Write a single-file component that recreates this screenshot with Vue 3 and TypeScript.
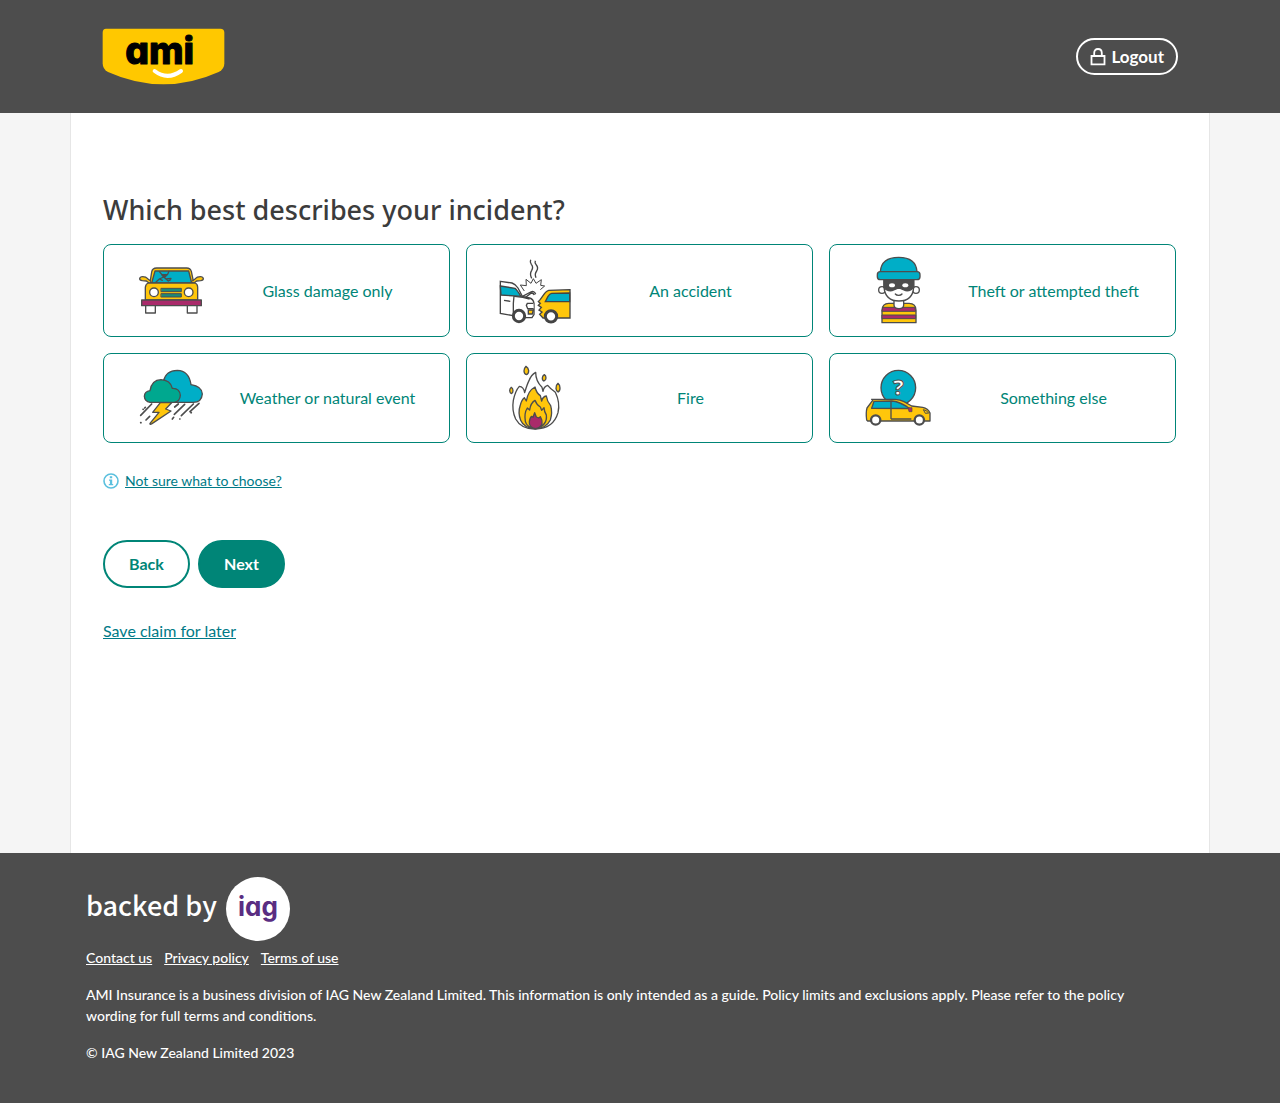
<script setup lang="ts">
import { ref } from 'vue'

type IconName = 'glass' | 'accident' | 'theft' | 'weather' | 'fire' | 'other'

interface Incident {
  icon: IconName
  label: string
}

const incidents: Incident[] = [
  { icon: 'glass', label: 'Glass damage only' },
  { icon: 'accident', label: 'An accident' },
  { icon: 'theft', label: 'Theft or attempted theft' },
  { icon: 'weather', label: 'Weather or natural event' },
  { icon: 'fire', label: 'Fire' },
  { icon: 'other', label: 'Something else' },
]

const footerLinks: string[] = ['Contact us', 'Privacy policy', 'Terms of use']

const selected = ref<IconName | null>(null)
</script>

<template>
  <div class="page">
    <header class="header">
      <div class="container header-inner">
        <svg class="brand" viewBox="0 0 369 171" role="img" aria-label="AMI">
          <path
            fill="#ffc800"
            d="M12 2H355Q367 2 367 14V106Q367 124 350 132Q268 169 184 169Q100 169 18 132Q2 124 2 106V14Q2 2 12 2Z"
          />
          <text class="brand-text" x="173" y="109" text-anchor="middle">ami</text>
          <path fill="none" stroke="#fff" stroke-width="12" stroke-linecap="round" d="M158 129Q196 158 237 129" />
        </svg>
        <button class="logout" type="button">
          <svg viewBox="0 0 16 18" width="16" height="18" aria-hidden="true">
            <path
              fill="none"
              stroke="#fff"
              stroke-width="1.8"
              d="M1.5 8H14.5V16.3H1.5ZM4.2 8V5Q4.2 1 8 1Q11.8 1 11.8 5V8"
            />
          </svg>
          Logout
        </button>
      </div>
    </header>

    <main class="container main">
      <h1>Which best describes your incident?</h1>

      <div class="cards">
        <button
          v-for="item in incidents"
          :key="item.icon"
          class="card"
          type="button"
          :aria-pressed="selected === item.icon"
          @click="selected = item.icon"
        >
          <svg v-if="item.icon === 'glass'" class="icon" viewBox="-9 -1 270 216" aria-hidden="true">
            <g stroke="#4d4d4d" stroke-width="4" stroke-linejoin="round" stroke-linecap="round">
              <path fill="#fff" d="M47 150H76V173H47ZM172 150H201V173H172Z" />
              <path fill="#ffc60b" d="M60 82L65 50Q67 38 80 38H170Q181 38 184 48L191 82Z" />
              <path fill="#00aec7" d="M65 83L75 47H176L185 83Z" />
              <path fill="#ffc60b" d="M57 83L49 77Q44 76 37 76Q29 75 29 70Q30 64 38 64Q48 64 53 70L61 76M192 83L200 77Q205 76 212 76Q220 75 220 70Q219 64 211 64Q201 64 196 70L188 76" />
              <path fill="#ffc60b" d="M55 83H195Q203 86 203 96V134H46V96Q47 86 55 83Z" />
              <circle cx="72" cy="111" r="13" fill="#fff" />
              <circle cx="176" cy="111" r="13" fill="#fff" />
              <path fill="#1b8a7a" stroke-width="3" d="M94 99H154V109H94ZM94 115H154V125H94Z" />
              <path fill="#a92a6a" d="M35 134H214V151H35Z" />
              <path fill="none" d="M88 49L96 58L113 57L117 48M96 58L101 65L111 60M101 65L88 71L78 80M101 65L108 71L123 69M108 71L115 77L122 73M88 71L97 75" />
              <path fill="#4d4d4d" d="M96 59L109 58L104 66Z" />
            </g>
          </svg>

          <svg v-else-if="item.icon === 'accident'" class="icon" viewBox="0 13 270 216" aria-hidden="true">
            <g fill="none" stroke="#444" stroke-width="4" stroke-linejoin="miter" stroke-linecap="butt">
              <path d="M122 27Q119 34 124 41Q131 49 125 59Q118 70 125 83M136 30Q133 37 139 43Q146 51 140 61Q133 70 138 81" />
              <path stroke-width="3" d="M103 121L91 103L109 105L108 86L123 98L130 84L138 98L154 87L152 104L164 106L151 117" />
              <path fill="#fff" d="M31 92L66 97Q77 101 84 112L97 137L119 142Q130 145 132 158V192L126 201H108L70 195L31 188Z" />
              <path fill="#00aec7" d="M31 106L75 113Q80 117 93 137L33 133Z" />
              <path d="M72 136L70 158V194M42 149L61 152M96 138L122 124Q133 119 137 131M103 143L124 127Q131 127 133 133M74 137L98 140L119 145" />
              <path fill="#fff" d="M130 158H112L109 164L113 174H131" />
              <path fill="#ffc60b" d="M130 178H115V190H127Z" />
              <path fill="#ffc60b" d="M240 117L176 119Q169 121 164 128L151 146L145 153L151 158L145 164L154 170L147 178L156 184L149 191L159 202H240Z" />
              <path fill="#00aec7" d="M239 127L185 128Q179 129 174 137L166 153H239Z" />
            </g>
            <g fill="#fff" stroke="#444" stroke-width="9">
              <circle cx="87" cy="196" r="17" />
              <circle cx="183" cy="197" r="17" />
            </g>
          </svg>

          <svg v-else-if="item.icon === 'theft'" class="icon icon-tall" viewBox="-21 9 270 225" aria-hidden="true">
            <g stroke="#4d4d4d" stroke-width="4" stroke-linejoin="round" stroke-linecap="round">
              <path fill="#ffc60b" d="M66 218V181Q67 160 86 160H147Q168 160 168 181V218Z" />
              <path fill="#a92a6a" stroke-width="3" d="M70 172H164L167 184H67ZM67 195H167V206H67Z" />
              <path fill="#fff" d="M102 145V165Q102 176 117 176Q131 176 131 165V145Z" />
              <circle cx="66" cy="120" r="10" fill="#fff" />
              <circle cx="168" cy="120" r="10" fill="#fff" />
              <path fill="#fff" d="M72 88H161V112Q158 153 117 153Q76 153 72 112Z" />
              <path fill="#4d4d4d" d="M72 90H161V112Q152 124 137 122L121 115H112L96 122Q80 124 72 112Z" />
              <path fill="none" d="M106 132Q109 136 116 136Q123 136 126 132" />
              <path fill="#00aec7" d="M61 65Q64 22 116 22Q168 22 171 65Z" />
              <rect x="52" y="65" width="128" height="24" rx="9" fill="#00aec7" />
            </g>
            <ellipse cx="96" cy="106" rx="9" ry="6" fill="#fff" />
            <ellipse cx="136" cy="106" rx="9" ry="6" fill="#fff" />
          </svg>

          <svg v-else-if="item.icon === 'weather'" class="icon" viewBox="-9 6 270 216" aria-hidden="true">
            <g stroke="#4d4d4d" stroke-width="4" stroke-linejoin="round" stroke-linecap="round">
              <path fill="#00aec7" d="M100 65Q107 31 142 31Q177 32 183 74Q216 79 217 102Q215 127 190 127H105Z" />
              <path fill="#00a88f" d="M60 127Q44 125 43 109Q44 94 60 92Q65 60 93 59Q121 60 127 85Q149 84 151 106Q150 125 132 127Z" />
              <path fill="#ffc60b" d="M91 128L68 157H87L60 190Q59 195 66 191L123 153L107 147L125 128Z" />
              <path
                fill="none"
                stroke-width="5"
                d="M65 132L32 166M145 132L134 141M164 133L133 163M190 132L154 167M207 130L180 155M59 169L48 180M46 142L44 144M39 148H40M32 188H33M131 172L127 177M149 177H150M183 158H184"
              />
            </g>
          </svg>

          <svg v-else-if="item.icon === 'fire'" class="icon" viewBox="0 6 270 216" aria-hidden="true">
            <g stroke="#4d4d4d" stroke-width="4" stroke-linejoin="round">
              <path fill="#fff" d="M136 207Q94 208 77 177Q65 151 70 121Q76 92 88 79Q101 80 104 98Q111 74 117 62Q123 45 137 37Q137 64 156 82Q158 90 159 94Q161 80 173 76Q181 86 196 97Q211 128 204 158Q190 207 136 207Z" />
              <path fill="#ffc60b" d="M136 206Q101 204 92 181Q83 158 91 135Q95 119 103 113L109 123Q114 92 135 81Q139 99 151 107L155 123Q158 110 169 108Q171 124 182 137Q188 158 181 180Q168 206 136 206Z" />
              <path fill="#ffc60b" d="M136 206Q110 202 106 184Q102 159 112 144L119 150Q122 128 135 121Q140 135 151 141L155 151L162 143Q163 157 169 165Q173 197 136 206Z" />
              <path fill="#a92a6a" d="M136 206Q116 202 118 185Q120 172 125 169L129 172L134 158L139 171L146 174L151 170Q158 181 156 193Q150 205 136 206Z" />
              <g fill="#ffc60b">
                <path d="M108 19Q102 25 102 33Q103 43 109 44Q116 42 116 32Q115 23 108 19ZM163 44Q157 48 157 54Q157 62 162 63Q168 60 168 54Q168 47 163 44ZM204 70Q197 76 198 85Q199 94 204 96Q210 94 210 84Q210 75 204 70ZM64 82Q59 86 59 92Q60 100 64 101Q69 99 69 92Q69 86 64 82Z" />
              </g>
            </g>
          </svg>

          <svg v-else class="icon" viewBox="-6 6 270 216" aria-hidden="true">
            <g stroke="#4d4d4d" stroke-width="4" stroke-linejoin="round">
              <circle cx="130" cy="83" r="52" fill="#00aec7" />
              <path fill="#ffc60b" d="M35 180Q32 158 36 144L53 121L50 118H121Q136 119 147 125L170 138L203 142Q219 145 225 159V183H38Z" />
              <path fill="#00aec7" d="M50 145L57 124L111 123Q132 125 156 140L164 146Z" />
              <path fill="none" d="M108 122V177M108 177H169M50 145H165" />
              <path fill="#a92a6a" stroke-width="2" d="M159 143H171V155H162Z" />
              <path fill="#ffc60b" stroke-width="3" d="M205 149Q214 150 221 159L211 160Z" />
            </g>
            <g fill="#fff" stroke="#4d4d4d" stroke-width="7">
              <circle cx="62" cy="180" r="14" />
              <circle cx="193" cy="180" r="14" />
            </g>
            <text class="question" x="130" y="105" text-anchor="middle">?</text>
          </svg>

          <span class="card-label">{{ item.label }}</span>
        </button>
      </div>

      <div class="help">
        <svg viewBox="0 0 16 16" width="16" height="16" aria-hidden="true">
          <circle cx="8" cy="8" r="7" fill="none" stroke="#5bc0de" stroke-width="1.6" />
          <path fill="#5bc0de" d="M6.8 3.3H9.2V5.3H6.8ZM6 6.4H9.2V11H10.2V12.3H5.8V11H6.9V7.7H6Z" />
        </svg>
        <a href="#">Not sure what to choose?</a>
      </div>

      <div class="actions">
        <button class="action" type="button">Back</button>
        <button class="action primary" type="button">Next</button>
      </div>

      <a class="save" href="#">Save claim for later</a>
    </main>

    <footer class="footer">
      <div class="container footer-inner">
        <div class="backed">
          <span class="backed-text">backed by</span>
          <svg class="iag" viewBox="0 0 64 64" width="64" height="64" role="img" aria-label="IAG">
            <circle cx="32" cy="32" r="32" fill="#fff" />
            <text class="iag-text" x="32" y="39" text-anchor="middle">iag</text>
          </svg>
        </div>
        <nav class="links">
          <a v-for="link in footerLinks" :key="link" href="#">{{ link }}</a>
        </nav>
        <p>
          AMI Insurance is a business division of IAG New Zealand Limited. This information is only intended as a
          guide. Policy limits and exclusions apply. Please refer to the policy wording for full terms and conditions.
        </p>
        <p>© IAG New Zealand Limited 2023</p>
      </div>
    </footer>
  </div>
</template>

<style>
body {
  margin: 0;
  background: #f5f5f5;
}
</style>

<style scoped>
.page {
  display: flex;
  flex-direction: column;
  min-height: 100vh;
  font-family: Lato, 'Open Sans', sans-serif;
  font-size: 16px;
  line-height: 24px;
  color: #3c3c3c;
}

.page * {
  box-sizing: border-box;
}

button {
  font: inherit;
  cursor: pointer;
}

.container {
  width: 100%;
  max-width: 1140px;
  margin: 0 auto;
}

.header {
  background: #4d4d4d;
}

.header-inner {
  display: flex;
  align-items: center;
  justify-content: space-between;
  padding: 28px 32px;
}

.brand {
  width: 123px;
  height: 57px;
}

.brand-text {
  font-family: Inter, sans-serif;
  font-size: 112px;
  font-weight: 800;
  font-feature-settings: 'cv11';
  stroke: #000;
  stroke-width: 3px;
  stroke-linejoin: round;
}

.logout {
  display: flex;
  align-items: center;
  gap: 5px;
  height: 37px;
  padding: 0 12px;
  border: 2px solid #fff;
  border-radius: 19px;
  background: transparent;
  color: #fff;
  font-size: 17px;
  font-weight: 700;
}

.main {
  flex: 1;
  padding: 79px 33px 32px 32px;
  border: solid #e6e6e6;
  border-width: 0 1px;
  background: #fff;
}

h1 {
  margin: 0 0 16px;
  font-family: 'Noto Sans', sans-serif;
  font-size: 27px;
  line-height: 36px;
  font-weight: 500;
}

.cards {
  display: grid;
  grid-template-columns: repeat(3, 1fr);
  gap: 16px;
}

.card {
  display: flex;
  align-items: center;
  gap: 4px;
  padding: 8px 15px 8px 23px;
  border: 1px solid #008577;
  border-radius: 8px;
  background: #fff;
  color: #008577;
}

.icon {
  flex: none;
  width: 90px;
  height: 72px;
}

.icon-tall {
  height: 75px;
}

.card-label {
  flex: 1;
  text-align: center;
}

.question {
  font-family: 'Noto Sans', sans-serif;
  font-size: 66px;
  font-weight: 800;
  fill: #fff;
  stroke: #4d4d4d;
  stroke-width: 3px;
}

.help {
  display: flex;
  align-items: center;
  gap: 6px;
  margin-top: 27px;
  font-size: 14px;
  line-height: 21px;
}

.help a,
.save {
  color: #007a87;
}

.actions {
  display: flex;
  gap: 8px;
  margin: 49px 0 31px;
}

.action {
  min-width: 87px;
  height: 48px;
  border: 2px solid #008577;
  border-radius: 24px;
  background: #fff;
  color: #008577;
  font-weight: 700;
}

.primary {
  background: #008577;
  color: #fff;
}

.footer {
  background: #4d4d4d;
  color: #fff;
  font-size: 14px;
  line-height: 21px;
  font-weight: 500;
}

.footer-inner {
  padding: 24px 16px 40px;
}

.backed {
  display: flex;
  align-items: center;
  gap: 9px;
}

.backed-text {
  margin-bottom: 8px;
  font-family: 'Noto Sans CJK SC', 'Noto Sans', sans-serif;
  font-size: 27px;
  line-height: 36px;
}

.iag-text {
  font-family: Inter, sans-serif;
  font-size: 26px;
  font-weight: 700;
  font-feature-settings: 'cv11';
  fill: #5a2d82;
}

.links {
  display: flex;
  gap: 12px;
  margin-top: 6px;
}

.links a {
  color: inherit;
}

p {
  margin: 16px 0 0;
  padding-right: 32px;
}
</style>
